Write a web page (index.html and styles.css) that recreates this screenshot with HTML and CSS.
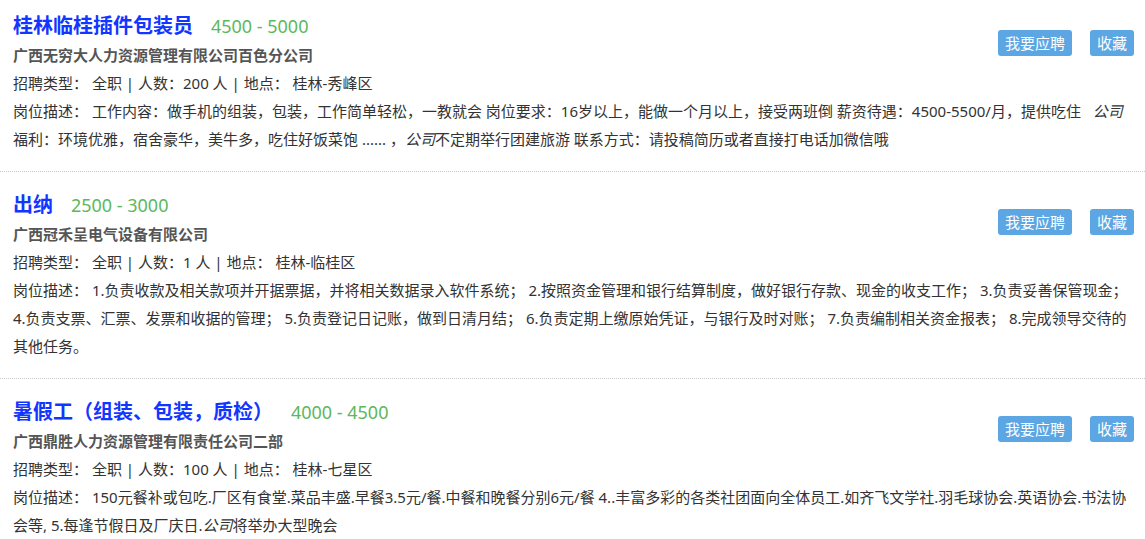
FILE: index.html
```html
<!DOCTYPE html>
<html lang="zh-CN">
<head>
  <meta charset="UTF-8" />
  <title>职位列表</title>
  <meta name="viewport" content="width=device-width, initial-scale=1.0" />
  <link rel="stylesheet" href="styles.css">
</head>
<body>
  <div class="job-list">
    <div class="job">
      <div class="job-head">
        <div class="job-info">
          <div class="job-title">
            <a class="name" href="#">桂林临桂插件包装员</a>
            <span class="salary">4500 - 5000</span>
          </div>
          <div class="company">广西无穷大人力资源管理有限公司百色分公司</div>
          <div class="meta">招聘类型： 全职 | 人数：200 人 | 地点： 桂林-秀峰区</div>
        </div>
        <div class="actions">
          <button class="btn" type="button">我要应聘</button>
          <button class="btn" type="button">收藏</button>
        </div>
      </div>
      <div class="desc">岗位描述： 工作内容：做手机的组装，包装，工作简单轻松，一教就会 岗位要求：16岁以上，能做一个月以上，接受两班倒 薪资待遇：4500-5500/月，提供吃住&nbsp;&nbsp; <em>公司</em> 福利：环境优雅，宿舍豪华，美牛多，吃住好饭菜饱 ...... ，<em>公司</em>不定期举行团建旅游 联系方式：请投稿简历或者直接打电话加微信哦</div>
    </div>

    <div class="job">
      <div class="job-head">
        <div class="job-info">
          <div class="job-title">
            <a class="name" href="#">出纳</a>
            <span class="salary">2500 - 3000</span>
          </div>
          <div class="company">广西冠禾呈电气设备有限公司</div>
          <div class="meta">招聘类型： 全职 | 人数：1 人 | 地点： 桂林-临桂区</div>
        </div>
        <div class="actions">
          <button class="btn" type="button">我要应聘</button>
          <button class="btn" type="button">收藏</button>
        </div>
      </div>
      <div class="desc">岗位描述： 1.负责收款及相关款项并开据票据，并将相关数据录入软件系统； 2.按照资金管理和银行结算制度，做好银行存款、现金的收支工作； 3.负责妥善保管现金； 4.负责支票、汇票、发票和收据的管理； 5.负责登记日记账，做到日清月结； 6.负责定期上缴原始凭证，与银行及时对账； 7.负责编制相关资金报表； 8.完成领导交待的其他任务。</div>
    </div>

    <div class="job">
      <div class="job-head">
        <div class="job-info">
          <div class="job-title">
            <a class="name" href="#">暑假工（组装、包装，质检）</a>
            <span class="salary">4000 - 4500</span>
          </div>
          <div class="company">广西鼎胜人力资源管理有限责任公司二部</div>
          <div class="meta">招聘类型： 全职 | 人数：100 人 | 地点： 桂林-七星区</div>
        </div>
        <div class="actions">
          <button class="btn" type="button">我要应聘</button>
          <button class="btn" type="button">收藏</button>
        </div>
      </div>
      <div class="desc">岗位描述： 150元餐补或包吃.厂区有食堂.菜品丰盛.早餐3.5元/餐.中餐和晚餐分别6元/餐 4..丰富多彩的各类社团面向全体员工.如齐飞文学社.羽毛球协会.英语协会.书法协会等, 5.每逢节假日及厂庆日.<em>公司</em>将举办大型晚会</div>
    </div>
  </div>
</body>
</html>
```

FILE: styles.css
```css
body {
  font-family: "Noto Sans", "Noto Sans CJK SC", sans-serif;
  font-size: 15px;
  margin: 0;
  padding: 0;
  background: #fff;
  color: #333;
}
.job {
  padding: 19px 11px 18px 13px;
  border-bottom: 1px dotted #c8c8c8;
}
.job:first-child {
  padding-top: 12px;
}
.job-head {
  display: flex;
  justify-content: space-between;
  align-items: flex-start;
}
.job-title {
  line-height: 28px;
}
.name {
  color: #1236ff;
  font-size: 20px;
  font-weight: 700;
  text-decoration: none;
}
.salary {
  color: #5cb85c;
  font-size: 18px;
  margin-left: 14px;
}
.company {
  color: #555;
  font-weight: 700;
  line-height: 28px;
}
.meta {
  line-height: 28px;
}
.actions {
  display: flex;
  gap: 18px;
  margin-top: 18px;
}
.btn {
  font-family: inherit;
  font-size: 15px;
  line-height: 26px;
  height: 26px;
  padding: 0 7px;
  border: none;
  border-radius: 3px;
  background: #5ba6e3;
  color: #fff;
  cursor: pointer;
}
.desc {
  line-height: 28px;
}
.desc em {
  font-style: italic;
}
```
